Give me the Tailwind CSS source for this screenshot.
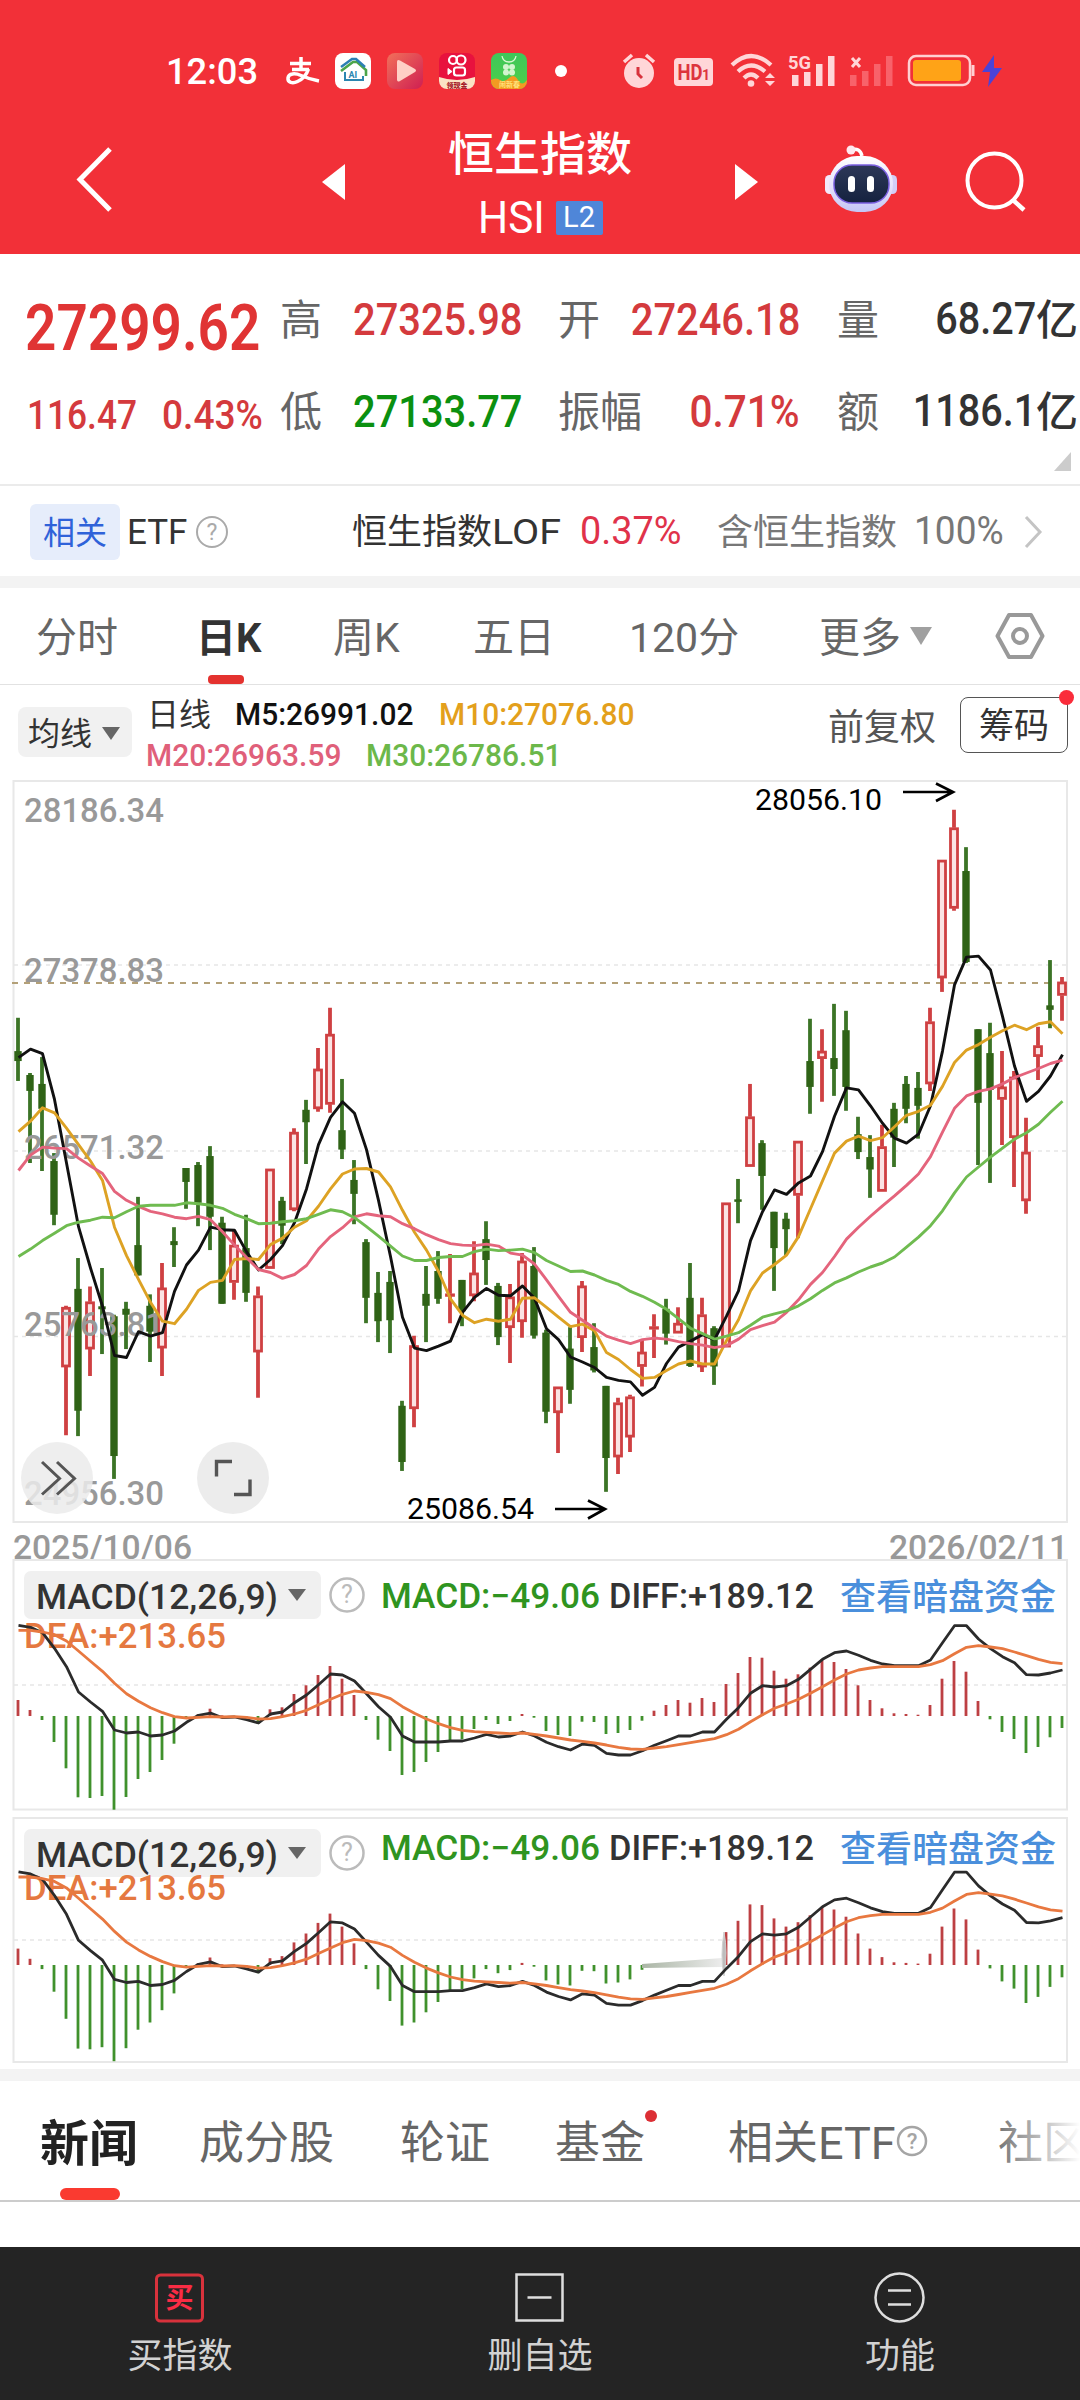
<!DOCTYPE html>
<html lang="zh-CN">
<head>
    <meta charset="UTF-8">
    <meta name="viewport" content="width=device-width, initial-scale=1.0">
    <title>恒生指数 HSI</title>
    <script src="https://cdn.jsdelivr.net/npm/@tailwindcss/browser@4"></script>
</head>
<body class="bg-white">
<div class="w-[1080px] h-[2400px] overflow-hidden flex flex-col bg-white text-[#333] font-['Roboto','Noto_Sans_CJK_SC',sans-serif] whitespace-nowrap">

    <!-- Header -->
    <header class="h-[254px] shrink-0 bg-[#f23038] text-white">
        <!-- Status bar -->
        <div class="h-[120px] pt-[22px] pl-[166px] flex items-center">
            <div class="w-[117px] text-[37px] leading-none font-medium"><span class="inline-block origin-left scale-x-[0.98]">12:03</span></div>
            <svg class="w-[50px] h-[40px]" viewBox="283 51 50 40" fill="none" stroke="#fff" stroke-width="3.500">
                <path d="M290 63.500h21M301 57v12M292 69.500h17"/>
                <path d="M308.500 69q-3 9-11 12.500c-5 2.500-10 1-9.500-3.500c.5-5 7.500-5 13-2.500q8 3.500 18 5.500"/>
            </svg>
            <svg class="w-[204px] h-[40px]" viewBox="333 51 204 40">
                <rect x="335" y="53" width="36" height="36" rx="8" fill="#fff"/>
                <path d="M341 71l12-9 4 0 9 8v6" fill="none" stroke="#4ba54a" stroke-width="2.600"/>
                <path d="M341 67l11-8h4l9 8" fill="none" stroke="#2c7fb5" stroke-width="2.500"/>
                <path d="M345 72v8h18v-4" fill="none" stroke="#2c86b0" stroke-width="2"/>
                <text x="348.500" y="77.500" font-size="9" font-weight="700" fill="#2c86b0">AI</text>
                <defs>
                    <linearGradient id="play" x1="0" y1="0" x2="1" y2="1"><stop offset="0" stop-color="#f2705a"/><stop offset="1" stop-color="#cf1f52"/></linearGradient>
                    <linearGradient id="leaf" x1="0" y1="0" x2="0" y2="1"><stop offset="0" stop-color="#3fc65a"/><stop offset="1" stop-color="#4cd04a"/></linearGradient>
                    <clipPath id="app3"><rect x="439" y="53" width="36" height="36" rx="8"/></clipPath>
                    <clipPath id="app4"><rect x="491" y="53" width="36" height="36" rx="8"/></clipPath>
                </defs>
                <rect x="387" y="53" width="36" height="36" rx="8" fill="url(#play)"/>
                <path d="M397 62q0-3 3-1.500l15 8.500q2 1.500 0 3l-15 9q-3 1.500-3-1.500z" fill="#ffd0c6"/>
                <g clip-path="url(#app3)">
                    <rect x="439" y="53" width="36" height="36" fill="#e8123e"/>
                    <circle cx="453" cy="60" r="4" fill="none" stroke="#fff" stroke-width="2.200"/>
                    <circle cx="461" cy="60" r="4.500" fill="none" stroke="#fff" stroke-width="2.200"/>
                    <rect x="454" y="67.500" width="11" height="8" rx="2.500" fill="none" stroke="#fff" stroke-width="2.200"/>
                    <path d="M452 71.500l-4-3v6z" fill="#fff" stroke="#fff"/>
                    <path d="M439 77q18 6 36 0v12h-36z" fill="#fbe3c4"/>
                    <text x="446.500" y="87.500" font-size="7" font-weight="900" fill="#a51d2a">领现金</text>
                </g>
                <g clip-path="url(#app4)">
                    <rect x="491" y="53" width="36" height="36" fill="url(#leaf)"/>
                    <path d="M502 56q1 6 7 6t7-6" fill="none" stroke="#d9f7d2" stroke-width="1.300"/>
                    <g fill="#d3f5cf"><circle cx="506" cy="67" r="3"/><circle cx="512" cy="67" r="3"/><circle cx="506" cy="72.500" r="3"/><circle cx="512" cy="72.500" r="3"/></g>
                    <path d="M491 80q5-3 9 0t9-2 9 2 9 0v12h-36z" fill="#f39a22"/>
                    <text x="499" y="87" font-size="7" font-weight="700" fill="#ffe27a">闹新春</text>
                </g>
            </svg>
            <svg class="w-[83px] h-[40px]" viewBox="537 51 83 40"><circle cx="561" cy="71" r="6" fill="#fff"/></svg>
            <!-- Alarm, HD, wifi -->
            <svg class="w-[160px] h-[40px]" viewBox="620 51 160 40" fill="#ffd6d8">
                <circle cx="639" cy="73" r="15"/>
                <path d="M624 62l8-7M654 62l-8-7" stroke="#ffd6d8" stroke-width="3.500"/>
                <path d="M638 67v7l4 4" fill="none" stroke="#d8323c" stroke-width="3"/>
                <rect x="674" y="58" width="39" height="28" rx="4"/>
                <text x="677.500" y="80" font-size="22" font-weight="700" fill="#dd343d" textLength="25" lengthAdjust="spacingAndGlyphs">HD</text>
                <text x="702" y="80" font-size="14" font-weight="700" fill="#dd343d">1</text>
                <g fill="none" stroke="#ffd6d8" stroke-width="4.200"><path d="M732 65q19-18 39 0"/><path d="M738 71.500q13-12 27 0"/><path d="M744 78q7-7 14 0"/></g>
                <circle cx="751" cy="83.500" r="3.300"/>
                <path d="M765 78l5-5 5 5zM765 81l5 5 5-5z"/>
            </svg>
            <!-- Signal -->
            <svg class="w-[120px] h-[40px]" viewBox="780 51 120 40" fill="#ffd6d8">
                <text x="788" y="69" font-size="19" font-weight="700" textLength="23" lengthAdjust="spacingAndGlyphs">5G</text>
                <rect x="792" y="75" width="6.500" height="11"/><rect x="804" y="72" width="6.500" height="14"/><rect x="816" y="64" width="6.500" height="22"/><rect x="828" y="56" width="6.500" height="30"/>
                <path d="M852 58l8 9M860 58l-8 9" stroke="#ffd6d8" stroke-width="3"/>
                <g fill="#f8626a"><rect x="850" y="75" width="6.500" height="11"/><rect x="862" y="71" width="6.500" height="15"/><rect x="874" y="64" width="6.500" height="22"/><rect x="886" y="56" width="6.500" height="30"/></g>
            </svg>
            <!-- Battery -->
            <svg class="w-[110px] h-[40px]" viewBox="900 51 110 40">
                <rect x="909" y="56" width="61" height="29" rx="7" fill="none" stroke="#ffd0d2" stroke-width="2.500"/>
                <rect x="913" y="60" width="48" height="21" rx="3" fill="#ffa317"/>
                <path d="M973 65v11" stroke="#ffd0d2" stroke-width="3"/>
                <path d="M994 55l-12 17h8l-2 15 14-19h-8z" fill="#4b43d8"/>
            </svg>
        </div>
        <!-- Title row -->
        <div class="h-[134px] flex">
            <svg class="w-[440px] h-[134px]" viewBox="0 120 440 134">
                <path d="M110 149L80 179.500L110 210" fill="none" stroke="#fff" stroke-width="5"/>
                <path d="M345 164v36l-23-18z" fill="#fff"/>
            </svg>
            <div class="w-[200px] flex flex-col items-center">
                <div class="h-[64px] pt-[4px] flex items-center text-[46px] font-medium">恒生指数</div>
                <div class="h-[68px] flex items-center">
                    <div class="w-[78px] text-[44px]"><span class="inline-block origin-left scale-x-[0.96]">HSI</span></div>
                    <div class="w-[47px] h-[34px] bg-[#4f86d8] rounded-xs flex items-center justify-center text-[29px]">L2</div>
                </div>
            </div>
            <svg class="w-[440px] h-[134px]" viewBox="640 120 440 134">
                <defs>
                    <linearGradient id="head" x1="0" y1="0" x2="0" y2="1"><stop offset="0" stop-color="#fff"/><stop offset=".6" stop-color="#e4defa"/><stop offset="1" stop-color="#c3c6f6"/></linearGradient>
                    <linearGradient id="face" x1="0" y1="0" x2="0" y2="1"><stop offset="0" stop-color="#2d3858"/><stop offset="1" stop-color="#15223f"/></linearGradient>
                </defs>
                <path d="M735 164v36l23-18z" fill="#fff"/>
                <path d="M851 150q9-3 11 6" fill="none" stroke="#fff" stroke-width="3.500"/>
                <circle cx="851" cy="150" r="4.500" fill="#ffe9ef"/>
                <rect x="825" y="175" width="10" height="19" rx="4.500" fill="#f3e9fb"/><rect x="887" y="175" width="10" height="19" rx="4.500" fill="#d3cdf6"/>
                <rect x="829" y="156" width="64" height="56" rx="28" fill="url(#head)"/>
                <rect x="834" y="165" width="55" height="38" rx="18" fill="url(#face)" stroke="#7a5fe0" stroke-width="1.500"/>
                <rect x="848" y="176" width="7" height="16" rx="3.500" fill="#fff"/><rect x="867" y="176" width="7" height="16" rx="3.500" fill="#fff"/>
                <circle cx="994.500" cy="180.500" r="27" fill="none" stroke="#fff" stroke-width="4"/>
                <path d="M1013 200l11 10" stroke="#fff" stroke-width="4.500"/>
            </svg>
        </div>
    </header>

    <!-- Quote summary -->
    <section class="h-[232px] shrink-0 pt-[19px] border-b-2 border-[#ebebeb] leading-none">
        <div class="grid grid-cols-[280px_73px_205px_81px_161px_37px_44px_197px] grid-rows-[92px_92px] items-center text-[42px] text-[#333] font-medium">
            <div class="pl-[25px] pt-[19px] text-[65px] font-semibold text-[#e03434]"><span class="inline-block origin-left scale-x-[0.845]">27299.62</span></div>
            <div class="pt-[3px] font-normal text-[#666]">高</div>
            <div class="pt-[2px] text-[44px] text-[#d43a3d]"><span class="inline-block origin-left scale-x-[0.905]">27325.98</span></div>
            <div class="pt-[3px] font-normal text-[#666]">开</div>
            <div class="pt-[2px] text-[44px] text-[#d43a3d] flex justify-end"><span class="inline-block origin-right scale-x-[0.905]">27246.18</span></div>
            <div></div>
            <div class="pt-[3px] font-normal text-[#666]">量</div>
            <div class="flex justify-end items-center"><span class="inline-block origin-right scale-x-[0.9] text-[44px]">68.27</span><span class="pt-[3px]">亿</span></div>

            <div class="pl-[27px] pt-[8px] text-[41px] text-[#d43a3d] flex"><span class="inline-block w-[135px] origin-left scale-x-[0.86]">116.47</span><span class="inline-block origin-left scale-x-[0.905]">0.43%</span></div>
            <div class="pt-[3px] font-normal text-[#666]">低</div>
            <div class="pt-[2px] text-[44px] text-[#0b9010]"><span class="inline-block origin-left scale-x-[0.905]">27133.77</span></div>
            <div class="pt-[3px] font-normal text-[#666]">振幅</div>
            <div class="pt-[2px] text-[44px] text-[#d43a3d] flex justify-end"><span class="inline-block origin-right scale-x-[0.92]">0.71%</span></div>
            <div></div>
            <div class="pt-[3px] font-normal text-[#666]">额</div>
            <div class="flex justify-end items-center"><span class="inline-block origin-right scale-x-[0.9] text-[44px]">1186.1</span><span class="pt-[3px]">亿</span></div>
        </div>
        <svg class="w-[17px] h-[19px] ml-[1054px] -mt-[5px]" viewBox="0 0 17 19"><path d="M17 0v19H0z" fill="#ccc"/></svg>
    </section>

    <!-- Related ETF -->
    <section class="h-[90px] shrink-0 pl-[30px] pt-[1px] flex items-center text-[35px] leading-none">
        <div class="w-[90px] h-[56px] pt-[2px] rounded-md bg-[#e6edfb] text-[#2f62d9] text-[32px] flex items-center justify-center">相关</div>
        <div class="w-[74px] pl-[7px] pt-[2px] text-[35px]"><span class="inline-block">ETF</span></div>
        <svg class="w-[36px] h-[36px]" viewBox="0 0 36 36"><circle cx="18" cy="18" r="15" fill="none" stroke="#aaa" stroke-width="2"/><text x="18" y="26" text-anchor="middle" font-size="23" fill="#aaa">?</text></svg>
        <div class="w-[227px] pl-[122px] pt-[2px] text-[#333] flex items-baseline">恒生指数<span class="inline-block origin-left scale-x-[1.13]">LOF</span></div>
        <div class="w-[138px] ml-[122px] pl-[1px] text-[39px] text-[#e0324a]"><span class="inline-block origin-left scale-x-[0.97]">0.37%</span></div>
        <div class="w-[197px] pt-[2px] text-[36px] text-[#777]">含恒生指数</div>
        <div class="w-[110px] text-[39px] text-[#777]"><span class="inline-block origin-left scale-x-[0.95]">100%</span></div>
        <svg class="w-[20px] h-[34px]" viewBox="0 0 20 34"><path d="M2 2l14 15L2 32" fill="none" stroke="#c4c4c4" stroke-width="3"/></svg>
    </section>
    <div class="h-[12px] shrink-0 bg-[#f3f3f3]"></div>

    <!-- Period tabs -->
    <nav class="h-[97px] shrink-0 pl-[36px] border-b border-[#e2e2e2] flex items-center text-[41px] text-[#666] leading-none">
        <div class="w-[160px] pt-[5px]">分时</div>
        <div class="w-[137px] h-full flex flex-col justify-end">
            <div class="h-[87px] pt-[15px] flex items-center font-bold text-[#333]"><span class="inline-block text-[40px]">日K</span></div>
            <div class="w-[36px] h-[9px] ml-[12px] rounded bg-[#e4322f]"></div>
        </div>
        <div class="w-[140px] pt-[5px]">周K</div>
        <div class="w-[156px] pt-[5px]">五日</div>
        <div class="w-[190px] pt-[5px]">120分</div>
        <div class="w-[91px] pt-[5px]">更多</div>
        <svg class="w-[22px] h-[18px]" viewBox="0 0 22 18"><path d="M0 0h22L11 18z" fill="#a0a0a0"/></svg>
        <svg class="w-[50px] h-[48px] ml-[63px]" viewBox="0 0 50 48"><path d="M14 3h22l11.500 21L36 45H14L2.500 24z" fill="none" stroke="#999" stroke-width="4" stroke-linejoin="round"/><circle cx="25" cy="24" r="7" fill="none" stroke="#999" stroke-width="4"/></svg>
    </nav>

    <!-- Moving averages -->
    <section class="h-[95px] shrink-0 pl-[18px] flex leading-none">
        <div class="w-[114px] h-[50px] mt-[22px] pt-[3px] pl-[10px] rounded-lg bg-[#f1f1f1] flex items-center gap-[10px] text-[32px]">均线
            <svg class="w-[18px] h-[13px]" viewBox="0 0 18 13"><path d="M0 0h18L9 13z" fill="#666"/></svg>
        </div>
        <div class="w-[689px] pl-[14px] pt-[8px] flex flex-col text-[32px] font-medium">
            <div class="h-[41px] flex items-center"><span class="w-[89px] pl-[1px] pt-[3px] font-normal">日线</span><span class="inline-block w-[204px] text-[#111]"><span class="inline-block origin-left scale-x-[0.935]">M5:26991.02</span></span><span class="inline-block origin-left scale-x-[0.935] text-[#e3a01c]">M10:27076.80</span></div>
            <div class="h-[41px] flex items-center"><span class="inline-block w-[220px] text-[#e0607a]"><span class="inline-block origin-left scale-x-[0.935]">M20:26963.59</span></span><span class="inline-block origin-left scale-x-[0.935] text-[#6cb84a]">M30:26786.51</span></div>
        </div>
        <div class="w-[139px] pt-[25px] pl-[7px] text-[36px] text-[#555]">前复权</div>
        <div class="relative w-[108px] h-[56px] mt-[12px] pt-[3px] border-[1.500px] border-[#555] rounded-lg flex items-center justify-center text-[35px]">筹码
            <div class="absolute -top-[8px] -right-[7px] w-[15px] h-[15px] rounded-full bg-[#fa2c3a]"></div>
        </div>
    </section>

    <!-- Candles and MACD panes, drawn by the script below -->
    <svg id="chart" class="w-[1080px] h-[1289px] shrink-0" viewBox="0 780 1080 1289"></svg>
    <div class="h-[12px] shrink-0 bg-[#f3f3f3]"></div>

    <!-- Content tabs -->
    <nav class="h-[121px] shrink-0 pl-[40px] border-b-2 border-[#ccc] flex items-center text-[45px] text-[#666] leading-none">
        <div class="w-[159px] h-full flex flex-col justify-end">
            <div class="h-[90px] pt-[6px] flex items-center text-[49px] font-bold text-[#222]">新闻</div>
            <div class="w-[60px] h-[12px] mt-[2px] ml-[20px] rounded-md bg-[#fa3a30]"></div>
        </div>
        <div class="w-[201px] pt-[6px]">成分股</div>
        <div class="w-[155px] pt-[6px]">轮证</div>
        <div class="relative w-[173px] pt-[6px]">基金
            <div class="absolute -top-[5px] left-[90px] w-[12px] h-[12px] rounded-full bg-[#dc2f35]"></div>
        </div>
        <div class="w-[168px] pt-[6px]">相关ETF</div>
        <svg class="w-[34px] h-[34px]" viewBox="0 0 34 34"><circle cx="16" cy="17" r="14" fill="none" stroke="#a5a5a5" stroke-width="2.500"/><text x="16" y="25" text-anchor="middle" font-size="22" font-weight="500" fill="#a5a5a5">?</text></svg>
        <div class="relative w-[82px] ml-[68px] pt-[6px] overflow-hidden">社区
            <div class="absolute inset-0 bg-linear-to-r from-white/10 to-white"></div>
        </div>
    </nav>

    <!-- Bottom bar -->
    <div class="h-[45px] shrink-0"></div>
    <footer class="h-[153px] shrink-0 bg-[#242424] grid grid-cols-3 text-[35px] text-[#d2d2d2] leading-none">
        <div class="flex flex-col items-center pt-[25px] gap-[15px]">
            <svg class="w-[52px] h-[52px]" viewBox="0 0 52 52"><rect x="2.500" y="3" width="46" height="46" rx="4" fill="none" stroke="#d8323c" stroke-width="3"/><text x="25.500" y="36" text-anchor="middle" font-size="28" font-weight="700" fill="#fa2c44">买</text></svg>
            <div>买指数</div>
        </div>
        <div class="flex flex-col items-center pt-[25px] gap-[15px]">
            <svg class="w-[52px] h-[52px]" viewBox="0 0 52 52" fill="none" stroke="#dedede" stroke-width="2.500"><path d="M2.500 2.500h46v46h-46zM13.500 25.500h24"/></svg>
            <div>删自选</div>
        </div>
        <div class="flex flex-col items-center pt-[25px] gap-[15px]">
            <svg class="w-[52px] h-[52px]" viewBox="0 0 52 52" fill="none" stroke="#dedede" stroke-width="2.500"><circle cx="25.500" cy="25.500" r="24"/><path d="M14 18.500h23M14 32.500h23"/></svg>
            <div>功能</div>
        </div>
    </footer>
</div>

<script>
    const out = [];
    const X = i => 18 + 12 * i;

    // --- Helpers ---
    const poly = (ys, y, color, w) => out.push(`<polyline points="${ys.map((v, i) => (X(i) + 0.5) + ',' + y(v).toFixed(1)).join(' ')}" fill="none" stroke="${color}" stroke-width="${w}" stroke-linejoin="round"/>`);
    const label = (x, y, w, size, color, s, weight = 400) => out.push(`<text x="${x}" y="${y}" font-size="${size}" font-weight="${weight}" fill="${color}" textLength="${w}" lengthAdjust="spacingAndGlyphs">${s}</text>`);
    const frame = (y1, y2) => out.push(`<rect x="13.5" y="${y1}" width="1053.500" height="${y2 - y1}" fill="none" stroke="#e8e8e8" stroke-width="2"/>`);
    const grid = y => out.push(`<path d="M14 ${y}H1066" stroke="#e6e6e6" stroke-width="1.500" stroke-dasharray="4 4"/>`);

    // --- Candles: up flag, high, body top, body bottom, low ---
    const candles = [
        [0,478,545,565,605],[0,589,593,625,770],[0,557,611,661,786],[0,750,766,874,895],[1,1057,1060,1180,1317],[0,961,1023,1268,1319],
        [1,1018,1049,1144,1198],[0,981,1058,1064,1154],[0,1075,1078,1359,1405],[0,1049,1063,1075,1144],[0,838,935,996,996],[0,1034,1057,1109,1170],
        [1,971,1021,1142,1198],[0,899,927,935,979],[0,780,780,808,862],[0,768,774,850,897],[0,736,756,878,945],[0,878,890,1053,1053],
        [1,905,935,1010,1045],[0,874,941,1031,1049],[1,1018,1037,1150,1242],[1,782,782,982,982],[0,838,846,896,933],[1,700,708,864,867],
        [0,643,663,688,772],[1,539,581,661,667],[1,458,511,652,669],[0,601,704,743,762],[0,764,804,832,893],[0,923,929,1041,1092],
        [0,989,1031,1088,1130],[0,987,1009,1086,1152],[0,1248,1258,1371,1389],[1,1117,1137,1264,1301],[0,977,1033,1057,1130],[0,947,987,1043,1053],
        [1,953,1033,1038,1092],[0,1005,1005,1068,1098],[1,927,991,1037,1048],[0,887,923,965,1015],[0,1011,1017,1120,1136],[1,1013,1039,1101,1172],
        [1,951,967,1089,1121],[0,939,977,1117,1123],[0,1105,1111,1270,1293],[1,1220,1220,1272,1353],[0,1100,1143,1226,1254],[1,1007,1017,1121,1150],
        [0,1092,1140,1187,1191],[0,1218,1218,1363,1431],[1,1242,1252,1361,1395],[1,1236,1240,1321,1351],[1,1125,1150,1179,1219],[1,1074,1099,1104,1162],
        [0,1043,1063,1113,1135],[1,1060,1092,1112,1112],[0,971,1041,1178,1180],[1,1041,1075,1180,1190],[0,1098,1102,1179,1216],[1,850,850,1140,1140],
        [0,802,843,848,891],[1,611,677,777,777],[0,724,730,796,864],[0,868,868,941,1027],[0,870,882,903,955],[1,726,726,835,921],
        [0,480,565,617,671],[1,501,545,560,647],[0,450,559,581,635],[0,464,503,617,665],[0,677,712,748,762],[0,714,758,783,840],
        [1,693,737,827,827],[0,649,661,719,778],[0,595,611,661,690],[0,587,619,655,721],[1,458,486,611,625],[1,161,161,398,426],
        [1,60,96,258,263],[0,135,183,366,368],[0,501,501,649,774],[0,488,549,623,810],[1,545,617,642,734],[1,585,597,719,818],
        [1,679,748,846,872],[1,496,534,556,603],[0,362,453,462,499],[1,396,406,433,484]
    ];
    const ma5 = [558,541,550,642,770,898,981,1058,1157,1161,1109,1118,1111,1028,975,945,899,904,905,948,985,964,936,890,822,733,678,647,670,743,845,958,1080,1142,1147,1138,1128,1070,1040,1022,1036,1037,1017,1042,1103,1125,1160,1170,1181,1201,1207,1210,1237,1221,1173,1140,1128,1115,1125,1078,1027,926,868,824,833,810,796,747,676,619,623,655,690,720,730,712,655,545,412,356,354,382,475,575,646,626,595,552];
    const ma10 = [707,686,659,669,700,733,766,805,899,956,1004,1050,1088,1093,1064,1026,1010,1006,964,962,964,934,921,899,886,857,822,792,782,781,788,818,865,909,945,988,1043,1076,1091,1084,1088,1084,1042,1041,1060,1080,1099,1094,1107,1151,1165,1185,1203,1201,1187,1174,1168,1174,1174,1127,1085,1027,991,974,955,918,862,806,750,726,716,725,719,697,674,666,654,616,568,543,532,517,504,493,502,490,486,510];
    const ma20 = [785,754,738,740,741,760,776,791,827,845,857,867,872,879,882,877,884,908,935,960,984,990,1002,994,976,943,918,900,878,872,876,878,892,902,914,924,932,935,936,933,937,951,955,973,1005,1038,1070,1086,1102,1118,1126,1133,1125,1122,1124,1129,1133,1136,1141,1137,1124,1105,1097,1090,1070,1045,1014,990,958,923,899,877,856,836,815,792,757,708,660,635,626,621,611,598,589,580,570,563];
    const ma30 = [958,943,926,911,896,889,885,879,880,868,857,855,855,855,850,852,855,861,873,882,892,891,888,886,882,873,864,868,880,898,917,937,957,966,966,960,958,958,948,943,946,945,943,950,966,977,988,987,995,1006,1014,1028,1038,1050,1064,1083,1102,1113,1124,1118,1111,1096,1080,1073,1067,1057,1043,1026,1011,1001,989,979,971,959,939,919,896,866,830,798,778,758,740,722,709,692,668,646];

    const K = v => 780 + v / 2.0103;
    frame(781, 1522);
    [965, 1151, 1336.5].forEach(grid);
    out.push('<path d="M12 983H1056" stroke="#b3a078" stroke-width="2" stroke-dasharray="6 6"/>');
    candles.forEach(([up, h, t, b, l], i) => {
        const x = X(i);
        if (up) {
            out.push(`<path d="M${x} ${K(h)}V${K(t)}M${x} ${K(b)}V${K(l)}" stroke="#cf4042" stroke-width="3.800"/>`);
            out.push(`<rect x="${x - 3.5}" y="${K(t) + 1}" width="7" height="${Math.max(K(b) - K(t) - 2, 0.5)}" fill="#fbe3e3" stroke="#cf4042" stroke-width="2.800"/>`);
        } else {
            out.push(`<path d="M${x} ${K(h)}V${K(l)}" stroke="#3c7426" stroke-width="3.800"/>`);
            out.push(`<rect x="${x - 3.7}" y="${K(t)}" width="7.400" height="${K(b) - K(t)}" fill="#2f6316"/>`);
        }
    });
    [[28186.34, 821.5], [27378.83, 982], [26571.32, 1159], [25763.81, 1335.5], [24956.30, 1504.5]].forEach(([v, y]) => label(24, y, 140, 34, '#999', v.toFixed(2), 500));
    poly(ma5, K, '#111', 2.9);
    poly(ma10, K, '#dda224', 2.9);
    poly(ma20, K, '#e4647c', 2.9);
    poly(ma30, K, '#6fbb50', 2.9);

    // High / low markers
    label(755, 810, 127, 30, '#000', '28056.10');
    out.push('<path d="M903 792H952M936 783.500L953 792L936 801" fill="none" stroke="#000" stroke-width="2.700"/>');
    label(407, 1518.5, 127, 30, '#000', '25086.54');
    out.push('<path d="M555 1509H604M588 1500.500L605 1509L588 1518.500" fill="none" stroke="#000" stroke-width="2.700"/>');

    // Round buttons
    out.push('<circle cx="57" cy="1478" r="36" fill="#ebebeb" fill-opacity=".85"/><path d="M42 1462L59.500 1478.500L42 1494.500M57 1462L74.500 1478.500L57 1494.500" fill="none" stroke="#555" stroke-width="3"/>');
    out.push('<circle cx="233" cy="1478" r="36" fill="#ebebeb" fill-opacity=".95"/><path d="M216.500 1476.500V1461.500H232M250 1479.500V1494.500H234" fill="none" stroke="#555" stroke-width="3.400"/>');

    label(13, 1559, 179, 34, '#999', '2025/10/06', 500);
    label(889, 1559, 179, 34, '#999', '2026/02/11', 500);

    // --- MACD ---
    const bars = [48,18,-12,-78,-157,-244,-246,-240,-281,-243,-189,-168,-132,-83,-5,5,22,2,-3,-5,-24,20,26,66,92,123,150,112,63,-12,-71,-105,-177,-168,-138,-108,-78,-70,-39,-12,-24,-15,6,-5,-45,-57,-60,-17,-18,-54,-51,-42,-14,16,33,48,40,54,42,96,129,177,175,136,112,125,145,170,162,141,92,48,23,8,6,4,33,112,165,133,45,-10,-48,-69,-111,-93,-64,-36];
    const diff = [256,262,278,325,380,456,486,514,570,579,576,588,585,573,547,526,519,533,531,539,549,522,516,488,465,434,402,405,423,461,500,532,588,606,606,606,603,603,594,583,591,588,576,588,607,620,630,612,616,640,645,645,632,616,602,588,588,576,576,538,503,460,437,441,437,418,388,358,338,333,346,361,372,377,377,377,360,308,257,257,297,326,350,368,404,405,399,390];
    const dea = [271,271,276,284,303,333,364,394,430,461,484,503,518,530,534,532,530,531,530,532,537,536,530,522,511,494,478,463,453,457,464,476,500,520,537,551,563,571,575,577,579,581,579,583,588,594,600,604,609,615,622,627,628,624,620,614,608,602,596,584,568,545,524,505,492,478,460,440,420,402,390,384,380,380,380,380,374,362,341,322,317,321,326,336,347,358,367,371];

    const macd = (top, bottom, zero, k, dash, pill, base, base2, skip) => {
        frame(top, bottom);
        grid(dash);
        bars.forEach((v, i) => {
            if (skip.includes(i)) return;
            out.push(`<path d="M${X(i)} ${zero}V${(zero - v * k).toFixed(1)}" stroke="${v > 0 ? '#bd4043' : '#40912c'}" stroke-width="2.800"/>`);
        });
        if (skip.length) {
            out.push('<path d="M642 1964L722 1958V1967L642 1968z" fill="url(#smudge)"/><path d="M724 1932q4 20 0 44q-4-20 0-44" fill="#bdbdbd" stroke="#cfcfcf"/>');
        }
        out.push(`<rect x="24" y="${pill}" width="297" height="48" rx="7" fill="#f0f0f0"/><path d="M288 ${pill + 18}h18l-9 12z" fill="#666"/>`);
        label(36, pill + 37.5, 242, 35, '#333', 'MACD(12,26,9)', 500);
        out.push(`<circle cx="347" cy="${pill + 24}" r="16.500" fill="none" stroke="#bbb" stroke-width="2.500"/><text x="347" y="${pill + 32}" text-anchor="middle" font-size="25" fill="#bbb">?</text>`);
        label(381, base, 219, 35, '#2f9420', 'MACD:−49.06', 500);
        label(609, base, 205, 35, '#333', 'DIFF:+189.12', 500);
        label(840, base + 2, 216, 36, '#4a8fdc', '查看暗盘资金', 500);
        label(24, base2, 202, 35, '#e57840', 'DEA:+213.65', 500);
        const y = v => zero + (v - 528) * k;
        poly(diff, y, '#2b2b2b', 2.8);
        poly(dea, y, '#e87840', 2.8);
    };
    out.push('<defs><linearGradient id="smudge"><stop offset="0" stop-color="#aab5a5"/><stop offset="1" stop-color="#ececec"/></linearGradient></defs>');
    macd(1560, 1809.5, 1716, 1 / 3, 1685, 1571, 1608, 1648, []);
    macd(1818, 2062, 1965, 0.3425, 1940, 1829, 1860, 1900, [53, 54, 55, 56, 57, 58]);

    document.getElementById('chart').innerHTML = out.join('');
</script>
</body>
</html>
